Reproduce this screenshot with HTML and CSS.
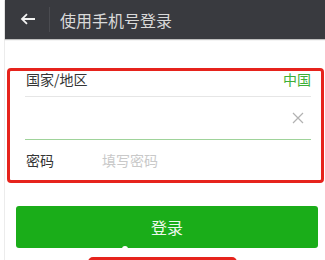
FILE: index.html
```html
<!DOCTYPE html>
<html lang="zh-CN">
<head>
    <meta charset="UTF-8">
    <meta name="viewport" content="width=device-width, initial-scale=1.0">
    <title>使用手机号登录</title>
    <link rel="stylesheet" href="styles.css">
</head>
<body>
    <div class="page">
        <div class="topbar">
            <span class="back">
                <svg width="16" height="12" viewBox="0 0 16 12"><path d="M15 6H2.5M7 1.2L2 6l5 4.8" fill="none" stroke="#f2f2f2" stroke-width="1.8"/></svg>
            </span>
            <span class="divider"></span>
            <h1 class="title">使用手机号登录</h1>
        </div>

        <div class="login">
            <div class="row country">
                <span class="label">国家/地区</span>
                <span class="value">中国</span>
            </div>
            <div class="row phone">
                <span class="clear">
                    <svg width="12" height="12" viewBox="0 0 12 12"><path d="M1 1l10 10M11 1L1 11" stroke="#b2b2b2" stroke-width="1.2"/></svg>
                </span>
            </div>
            <div class="row pwd">
                <span class="label">密码</span>
                <span class="placeholder">填写密码</span>
            </div>
        </div>

        <div class="submit">
            登录
            <span class="handle"></span>
        </div>
        <div class="tip"></div>
    </div>
</body>
</html>
```

FILE: styles.css
```css
body {
    margin: 0;
    padding: 0 0 0 4px;
    width: 321px;
    height: 260px;
    overflow: hidden;
    background-color: #fff;
    font-family: "Noto Sans CJK SC", "Noto Sans", sans-serif;
}
.page {
    height: 260px;
    border-left: 1px solid #ececec;
}
.topbar {
    height: 39px;
    background-color: #393a3f;
    display: flex;
    align-items: center;
    padding-left: 15px;
    box-shadow: 0 1px 1px rgba(0, 0, 0, 0.25);
}
.back {
    display: flex;
    width: 16px;
    height: 12px;
    margin-top: -1px;
}
.divider {
    width: 1px;
    height: 25px;
    background-color: #4a4b50;
    margin-left: 13px;
}
.title {
    margin: 0 0 0 10px;
    font-size: 16px;
    font-weight: normal;
    color: #d9d9d9;
    line-height: 20px;
}
.login {
    margin: 29px 1px 0 2px;
    border: 3px solid #e6231c;
    border-radius: 4px;
    padding: 0 10px 0 15px;
}
.row {
    display: flex;
    align-items: center;
    font-size: 14px;
    color: #353535;
}
.label {
    margin-left: 1px;
    white-space: nowrap;
}
.country {
    height: 24px;
    align-items: flex-start;
    line-height: 14px;
    padding-top: 1px;
    border-bottom: 1px solid #e6e6e6;
}
.country .value {
    margin-left: auto;
    color: #3daf37;
}
.phone {
    height: 42px;
    justify-content: flex-end;
    border-bottom: 1px solid #9fd39a;
}
.clear {
    display: flex;
    margin-right: 7px;
}
.pwd {
    height: 39px;
    padding-bottom: 1px;
}
.pwd .label {
    width: 76px;
}
.placeholder {
    color: #c9c9c9;
}
.submit {
    position: relative;
    margin: 23px 7px 0 11px;
    height: 42px;
    border-radius: 3px;
    background-color: #1aad19;
    color: #eef8ee;
    font-size: 16px;
    display: flex;
    justify-content: center;
    align-items: center;
}
.handle {
    position: absolute;
    left: 106px;
    bottom: -2px;
    width: 6px;
    height: 4px;
    border-radius: 3px 3px 0 0;
    background-color: #fff;
}
.tip {
    width: 149px;
    height: 10px;
    margin: 9px 0 0 83px;
    border-radius: 5px 5px 0 0;
    background-color: #e6231c;
}
```
